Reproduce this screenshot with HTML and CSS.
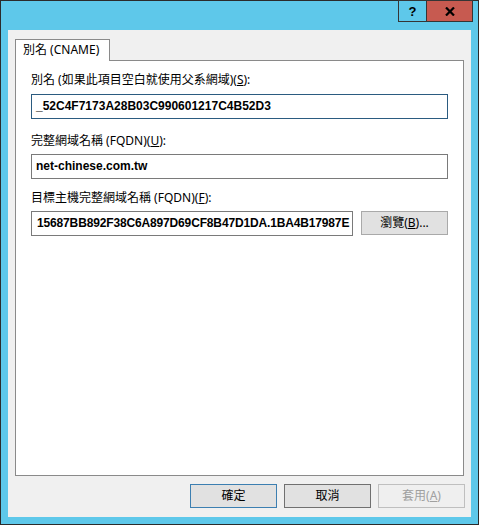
FILE: index.html
```html
<!DOCTYPE html>
<html lang="zh-Hant">
<head>
  <meta charset="UTF-8" />
  <title>別名 (CNAME)</title>
  <link rel="stylesheet" href="styles.css">
</head>
<body>

<div class="window">
  <!-- Barra de título -->
  <div class="titlebar">
    <div class="caption">
      <div class="cap-btn help">?</div>
      <div class="cap-btn close">
        <svg width="10" height="9" viewBox="0 0 10 9">
          <path d="M1 0.5 L9 8.5 M9 0.5 L1 8.5" stroke="#000" stroke-width="2.2" fill="none"/>
        </svg>
      </div>
    </div>
  </div>

  <div class="client">
    <div class="tabs">
      <div class="tab">別名 (CNAME)</div>
    </div>

    <div class="panel">
      <div class="field">
        <label>別名 (如果此項目空白就使用父系網域)(<u>S</u>):</label>
        <div class="textbox focused">_52C4F7173A28B03C990601217C4B52D3</div>
      </div>

      <div class="field field-fqdn">
        <label>完整網域名稱 (FQDN)(<u>U</u>):</label>
        <div class="textbox">net-chinese.com.tw</div>
      </div>

      <div class="field field-target">
        <label>目標主機完整網域名稱 (FQDN)(<u>F</u>):</label>
        <div class="row">
          <div class="textbox long">15687BB892F38C6A897D69CF8B47D1DA.1BA4B17987E</div>
          <button class="btn">瀏覽(<u>B</u>)...</button>
        </div>
      </div>
    </div>

    <!-- Botões de baixo -->
    <div class="footer">
      <button class="btn default">確定</button>
      <button class="btn cancel">取消</button>
      <button class="btn disabled">套用(<u>A</u>)</button>
    </div>
  </div>
</div>

</body>
</html>
```

FILE: styles.css
```css
* {
  margin: 0;
  padding: 0;
  box-sizing: border-box;
}

body {
  width: 479px;
  height: 525px;
  overflow: hidden;
  font-family: "Noto Sans", "Noto Sans CJK TC", sans-serif;
  font-size: 12px;
  color: #000;
}

.window {
  width: 479px;
  height: 525px;
  border: 1px solid #2b2b2b;
  background: #5ec8ea;
  display: flex;
  flex-direction: column;
  padding: 0 7px 7px 7px;
}

.titlebar {
  height: 29px;
  display: flex;
  justify-content: flex-end;
  align-items: flex-start;
}

.caption {
  display: flex;
  height: 22px;
  margin: -1px -2px 0 0;
  border: 1px solid #353535;
}

.cap-btn {
  display: flex;
  justify-content: center;
  align-items: center;
  font-family: "Liberation Sans", sans-serif;
  font-weight: bold;
  font-size: 13px;
}

.cap-btn.help {
  width: 28px;
  border-right: 1px solid #353535;
  background: #5ec8ea;
}

.cap-btn.close {
  width: 45px;
  background: #c75a50;
}

.client {
  flex: 1;
  background: #f0f0f0;
  display: flex;
  flex-direction: column;
  padding: 9px 7px 9px 7px;
}

.tabs {
  display: flex;
}

.tab {
  width: 95px;
  height: 22px;
  background: #fff;
  border: 1px solid #8a8a8a;
  border-bottom: none;
  padding-left: 7px;
  line-height: 20px;
  margin-bottom: -1px;
  position: relative;
  z-index: 1;
}

.panel {
  flex: 1;
  background: #fff;
  border: 1px solid #8a8a8a;
  padding: 11px 15px 0 15px;
}

.field label {
  display: block;
  line-height: 16px;
  margin-bottom: 6px;
}

.field-fqdn {
  margin-top: 14px;
}

.field-fqdn label,
.field-target label {
  margin-bottom: 5px;
}

.field-target {
  margin-top: 11px;
}

.textbox {
  height: 25px;
  border: 1px solid #7a7a7a;
  background: #fff;
  padding: 0 4px;
  font-family: "Liberation Sans", sans-serif;
  font-weight: bold;
  font-size: 12px;
  line-height: 23px;
  white-space: nowrap;
  overflow: hidden;
}

.textbox.focused {
  border-color: #2b5b80;
}

.textbox.long {
  padding: 0 0 0 5px;
  letter-spacing: -0.15px;
}

.row {
  display: flex;
  align-items: flex-start;
  gap: 8px;
}

.row .textbox {
  flex: 1;
}

.btn {
  width: 87px;
  height: 24px;
  background: #e1e1e1;
  border: 1px solid #a9a9a9;
  font-family: inherit;
  font-size: 12px;
  line-height: 22px;
  color: #000;
  text-align: center;
}

.footer {
  display: flex;
  justify-content: flex-end;
  gap: 7px;
  margin: 8px -1px 0 0;
}

.btn.default {
  border-color: #3c7fb1;
}

.btn.cancel {
  border-color: #707070;
}

.btn.disabled {
  background: #efefef;
  border-color: #bfbfbf;
  color: #a0a0a0;
}
```
